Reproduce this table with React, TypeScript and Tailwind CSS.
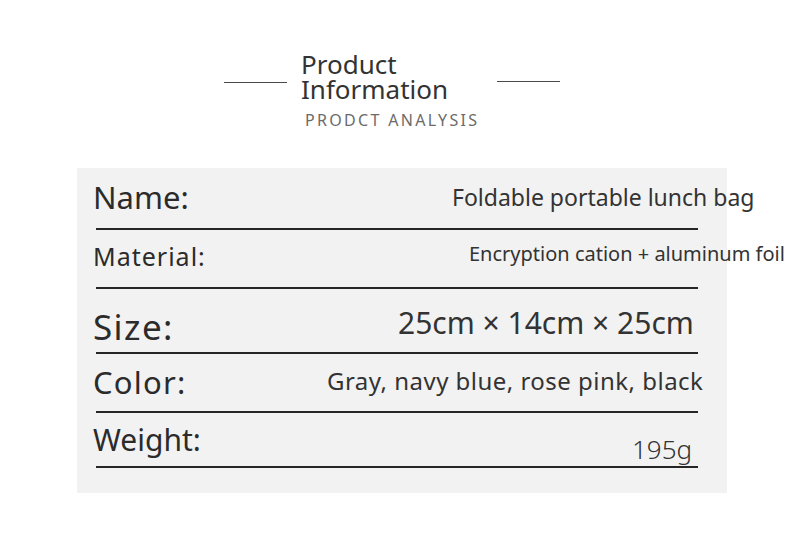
const rows = [
  {
    label: "Name:",
    value: "Foldable portable lunch bag",
    h: "h-[60px]",
    labelCls: "text-[31px] mt-[14px]",
    valueCls: "text-[23px] mt-[18px] ml-[139px]"
  },
  {
    label: "Material:",
    value: "Encryption cation + aluminum foil",
    h: "h-[57px]",
    labelCls: "text-[25px] mt-[14px] tracking-[0.04em]",
    valueCls: "text-[20px] mt-[14px] ml-[156px]"
  },
  {
    label: "Size:",
    value: "25cm × 14cm × 25cm",
    h: "h-[63px]",
    labelCls: "text-[35px] mt-[20px] tracking-[0.04em]",
    valueCls: "text-[30px] mt-[19px] ml-[85px]"
  },
  {
    label: "Color:",
    value: "Gray, navy blue, rose pink, black",
    h: "h-[57px]",
    labelCls: "text-[31px] mt-[13px] tracking-[0.04em]",
    valueCls: "text-[24px] mt-[15px] ml-[14px] tracking-[0.02em]"
  },
  {
    label: "Weight:",
    value: "195g",
    h: "h-[53px]",
    labelCls: "text-[30px] mt-[12px]",
    valueCls: "text-[26px] font-light mt-[23px] ml-[319px]"
  }
];

export default function App() {
  return (
    <div className="h-[555px] w-[790px] overflow-hidden bg-white font-['Noto_Sans',sans-serif] text-[#2b2b2b]">
      <div className="flex items-start pl-[224px] pt-[52px]">
        <div className="mt-[30px] h-px w-[63px] bg-[#4a4a4a]" />
        <div className="ml-[14px] w-[196px]">
          <p className="text-[26px] leading-[25px] text-[#333]">
            Product
            <br />
            Information
          </p>
          <p className="mt-[10px] pl-[4px] text-[16px] leading-none tracking-[0.145em] text-[#6b6b6b]">
            PRODCT ANALYSIS
          </p>
        </div>
        <div className="mt-[29px] h-px w-[63px] bg-[#4a4a4a]" />
      </div>

      <div className="ml-[77px] mt-[40px] h-[325px] w-[650px] bg-[#f2f2f2] pl-[16px]">
        {rows.map((row) => (
          <div key={row.label}>
            <div className={`flex items-start whitespace-nowrap ${row.h}`}>
              <span className={`w-[220px] shrink-0 leading-none ${row.labelCls}`}>
                {row.label}
              </span>
              <span className={`leading-none text-[#333] ${row.valueCls}`}>
                {row.value}
              </span>
            </div>
            <div className="ml-[3px] h-[2px] w-[602px] bg-[#262626]" />
          </div>
        ))}
      </div>
    </div>
  );
}
